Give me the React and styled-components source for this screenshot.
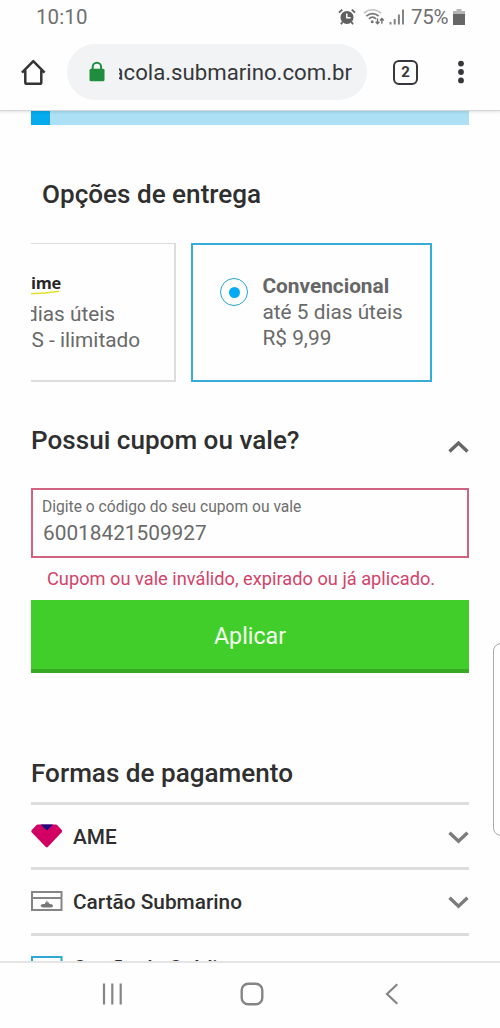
import React from "react";
import styled, { createGlobalStyle } from "styled-components";

const GlobalStyle = createGlobalStyle`
  * {
    box-sizing: border-box;
  }
  body {
    margin: 0;
    background-color: #FEFEFE;
    font-family: Roboto, "Noto Sans", sans-serif;
    color: #2F2F2F;
  }
  svg {
    display: block;
    flex-shrink: 0;
  }
`;

const Screen = styled.div`
  position: relative;
  display: flex;
  flex-direction: column;
  width: 500px;
  height: 1028px;
  overflow: hidden;
  background-color: #FEFEFE;
`;

const StatusBar = styled.div`
  display: flex;
  align-items: center;
  justify-content: space-between;
  height: 34px;
  padding: 0 35px 0 36px;
  background-color: #FEFEFE;
  color: #707070;
  font-size: 20.5px;
  line-height: 34px;
  z-index: 2;
`;

const Clock = styled.span`
  letter-spacing: 0.1px;
`;

const StatusIcons = styled.div`
  display: flex;
  align-items: center;
`;

const Wifi = styled.span`
  margin: 0 4px 0 7px;
`;

const Battery = styled.span`
  width: 40px;
  margin: 0 2px 0 6px;
  letter-spacing: -0.3px;
`;

const Toolbar = styled.header`
  display: flex;
  align-items: center;
  flex-shrink: 0;
  height: 77px;
  padding: 0 32px 0 20px;
  background-color: #FEFEFE;
  border-bottom: 1px solid #D6D6D6;
  box-shadow: 0 1px 3px rgba(0, 0, 0, 0.12);
  z-index: 1;
`;

const AddressBar = styled.div`
  display: flex;
  align-items: center;
  width: 300px;
  height: 56px;
  margin: 0 26px 0 20px;
  padding: 0 0 0 21px;
  border-radius: 28px;
  background-color: #F1F3F4;
`;

const Url = styled.div`
  display: flex;
  justify-content: flex-end;
  width: 233px;
  margin-left: 13px;
  overflow: hidden;
  font-size: 22.2px;
  line-height: 30px;
  white-space: nowrap;
  color: #36383B;
`;

const TabCount = styled.div`
  display: flex;
  align-items: center;
  justify-content: center;
  width: 25px;
  height: 25px;
  margin-right: 39px;
  border: 2.5px solid #35373A;
  border-radius: 6px;
  font-size: 15px;
  font-weight: 700;
  color: #35373A;
`;

const Page = styled.main`
  display: flex;
  flex-direction: column;
  flex-shrink: 0;
  height: 850px;
  padding: 0 31px;
  overflow: hidden;
`;

const Progress = styled.div`
  flex-shrink: 0;
  height: 14px;
  background-color: #ABE0F5;
`;

const ProgressValue = styled.div`
  width: 19px;
  height: 14px;
  background-color: #05ABEC;
`;

const Title = styled.h2`
  margin: ${({ $margin }) => $margin || "0"};
  font-size: 26.1px;
  font-weight: 500;
  line-height: 34px;
`;

const Options = styled.section`
  display: flex;
  flex-shrink: 0;
  gap: 15px;
  height: 139px;
  margin-top: 32px;
`;

const Option = styled.div`
  display: flex;
  width: ${({ $selected }) => ($selected ? "241px" : "145px")};
  padding: ${({ $selected }) => ($selected ? "28px 0 0 27px" : "29px 0 0")};
  border: 2px solid ${({ $selected }) => ($selected ? "#35ADD6" : "#DDD")};
  border-width: ${({ $selected }) => ($selected ? "2px" : "1px 2px 2px 0")};
  overflow: hidden;
`;

const Radio = styled.span`
  display: flex;
  align-items: center;
  justify-content: center;
  flex-shrink: 0;
  width: 28px;
  height: 28px;
  margin: 5px 14.5px 0 0;
  border: 1.5px solid #29A5CE;
  border-radius: 50%;
  &::after {
    content: "";
    width: 11px;
    height: 11px;
    border-radius: 50%;
    background-color: #05ABF2;
  }
`;

const OptionText = styled.div`
  font-size: 20.8px;
  line-height: 26px;
  white-space: nowrap;
  color: #6A6A6A;
  strong {
    font-weight: 700;
    color: #666;
  }
`;

const PrimeLogo = styled.div`
  height: 28px;
  font-family: "Open Sans", sans-serif;
  font-size: 16.4px;
  font-weight: 700;
  letter-spacing: -0.3px;
  line-height: 20px;
  color: #262626;
  svg {
    margin-top: -3px;
  }
`;

const ClippedLine = styled.div`
  margin-left: ${({ $offset }) => $offset};
`;

const CouponHeader = styled.div`
  display: flex;
  justify-content: space-between;
  height: 34px;
  flex-shrink: 0;
  margin-top: 41px;
  svg {
    margin-top: 17px;
  }
`;

const Field = styled.label`
  display: flex;
  flex-direction: column;
  flex-shrink: 0;
  height: 70px;
  margin-top: 31px;
  padding: 8px 10px 0 9px;
  border: 2px solid #D0637F;
  font-size: 15.6px;
  line-height: 18px;
  color: #6E6E6E;
`;

const Input = styled.input`
  height: 28px;
  margin: 3px 0 0 1px;
  padding: 0;
  border: none;
  outline: none;
  background: none;
  font-family: inherit;
  font-size: 20.8px;
  color: #6A6A6A;
`;

const ErrorMessage = styled.p`
  flex-shrink: 0;
  height: 42px;
  margin: 0;
  padding-left: 16px;
  font-size: 18.24px;
  line-height: 41px;
  white-space: nowrap;
  color: #D3436A;
`;

const ApplyButton = styled.button`
  flex-shrink: 0;
  height: 73px;
  padding: 3px 0 0;
  border: none;
  border-bottom: 4px solid #35AA22;
  background-color: #41CE2A;
  font-family: inherit;
  font-size: 23.2px;
  color: #F4FFF0;
`;

const PaymentList = styled.ul`
  flex-shrink: 0;
  margin: 12px 0 0;
  padding: 0;
  list-style: none;
`;

const PaymentItem = styled.li`
  display: flex;
  align-items: center;
  height: 65.3px;
  border-top: 3px solid #DCDCDC;
  font-size: 20.8px;
  font-weight: 500;
  span {
    flex: 1;
    margin: 2px 0 0 10px;
  }
  svg:last-child {
    margin-top: 2px;
  }
  &:last-child span {
    margin-top: 3px;
  }
`;

const NavBar = styled.nav`
  display: flex;
  align-items: center;
  flex-shrink: 0;
  height: 67px;
  padding: 0 101px 4px;
  border-top: 2px solid #E5E5E5;
`;

const NavButton = styled.div`
  margin-right: ${({ $gap }) => $gap};
`;

// edge panel handle, floats over the page
const EdgeHandle = styled.div`
  position: absolute;
  top: 643px;
  right: -12px;
  width: 19px;
  height: 193px;
  border: 1px solid #AAA;
  border-radius: 8px;
  background-color: #FEFEFE;
  z-index: 2;
`;

const AlarmIcon = () => (
  <svg width="18" height="18" viewBox="0 0 18 18" fill="none">
    <circle cx="9" cy="9.4" r="6.5" fill="#606060" />
    <path d="M1 4.6 4.2 1.6M17 4.6l-3.2-3M4.6 14 3 16.3M13.4 14l1.6 2.3" stroke="#606060" strokeWidth="1.8" />
    <path d="M8.8 5.4v4.3h3.8" stroke="#FEFEFE" strokeWidth="1.5" />
  </svg>
);

const WifiIcon = () => (
  <svg width="22" height="18" viewBox="0 0 22 18" fill="none" strokeWidth="1.7">
    <path d="M1 5.2c5-4.6 12-4.6 17 0" stroke="#C4C4C4" />
    <path d="M3.4 8.1c3.6-3.4 8.6-3.4 12.2 0" stroke="#777" />
    <path d="M5.9 10.9c2.2-2.2 5-2.2 7.2 0" stroke="#777" />
    <circle cx="9.2" cy="13.8" r="1.5" fill="#777" />
    <path d="M14.5 10.5v5M12.6 13.8l1.9 2 1.9-2M18.9 15.8v-5M17 12.6l1.9-2 1.9 2" stroke="#707070" strokeWidth="1.4" />
  </svg>
);

const SignalIcon = () => (
  <svg width="16" height="18" viewBox="0 0 16 18" fill="#858585">
    <path d="M.5 14h2v2.5h-2zM4.7 11h2v5.5h-2zM8.9 6.5h2v10h-2zM13 1.5h2v15h-2z" />
  </svg>
);

const BatteryIcon = () => (
  <svg width="12" height="18" viewBox="0 0 12 18">
    <path d="M3.5 1h5v2H12v4H0V3h3.5z" fill="#B5B5B5" />
    <path d="M0 6h12v10.5q0 .5-.5.5H.5q-.5 0-.5-.5z" fill="#666" />
  </svg>
);

const HomeIcon = () => (
  <svg width="27" height="27" viewBox="0 0 27 27" fill="none" stroke="#333" strokeWidth="2.5">
    <path d="M2 13.6 13.3 2.2l11.3 11.4M5.3 11.2v12q0 1.6 1.6 1.6h12.8q1.6 0 1.6-1.6v-12" strokeLinejoin="round" />
  </svg>
);

const LockIcon = () => (
  <svg width="18" height="22" viewBox="0 0 18 22">
    <path d="M4.7 9V5.9a4.2 4.2 0 0 1 8.4 0V9" fill="none" stroke="#1E8E3E" strokeWidth="2" />
    <rect x="1.5" y="7.7" width="15" height="12.6" rx="1.5" fill="#1E8E3E" />
  </svg>
);

const MenuIcon = () => (
  <svg width="8" height="24" viewBox="0 0 8 24" fill="#35373A">
    <circle cx="4" cy="3.6" r="2.9" />
    <circle cx="4" cy="12" r="2.9" />
    <circle cx="4" cy="20.4" r="2.9" />
  </svg>
);

const Chevron = ({ up }) => (
  <svg width="21" height="13" viewBox="0 0 21 13" fill="none" stroke={up ? "#666" : "#7C7C7C"} strokeWidth="3.4">
    <path d={up ? "M1.5 11.5 10.5 3l9 8.5" : "M1.5 1.7 10.5 10.2l9-8.5"} />
  </svg>
);

const AmeIcon = () => (
  <svg width="32" height="24" viewBox="0 0 32 24">
    <path d="M6.8.6h18q1 0 1.8.8L30.7 6q.9 1.2-.2 2.4L17 22.8q-1.2 1.2-2.4 0L.9 8.4Q-.2 7.2.8 6L5 1.4Q5.8.6 6.8.6Z" fill="#D30063" />
    <path d="M9.7.6h12.4l-6.2 5.8z" fill="#1B0A82" />
  </svg>
);

const SubmarinoCardIcon = () => (
  <svg width="32" height="20" viewBox="0 0 32 20">
    <path d="M1 1h29.5v18H1zM1 7h29.5" fill="none" stroke="#858585" strokeWidth="2" />
    <path d="M9.5 14.5q.8-1.4 3.5-1.4h1v-1.7h1.4V9.8h1v1.6h1.8v1.7q3.2 0 3.8 1.4.3 1.8-2.4 1.9h-7.6q-2.3-.1-2.5-1.9z" fill="#777" />
  </svg>
);

const CreditCardIcon = () => (
  <svg width="32" height="22" viewBox="0 0 32 22">
    <path d="M1 1h29.5v20H1zM1 8h29.5" fill="none" stroke="#2FA8D2" strokeWidth="2" />
  </svg>
);

const payments = [
  { name: "AME", Icon: AmeIcon },
  { name: "Cartão Submarino", Icon: SubmarinoCardIcon },
  { name: "Cartão de Crédito", Icon: CreditCardIcon },
];

const App = () => (
  <>
    <GlobalStyle />
    <Screen>
      <StatusBar>
        <Clock>10:10</Clock>
        <StatusIcons>
          <AlarmIcon />
          <Wifi>
            <WifiIcon />
          </Wifi>
          <SignalIcon />
          <Battery>75%</Battery>
          <BatteryIcon />
        </StatusIcons>
      </StatusBar>
      <Toolbar>
        <HomeIcon />
        <AddressBar>
          <LockIcon />
          <Url>acola.submarino.com.br</Url>
        </AddressBar>
        <TabCount>2</TabCount>
        <MenuIcon />
      </Toolbar>
      <Page>
        <Progress>
          <ProgressValue />
        </Progress>
        <Title $margin="52px 0 0 11px">Opções de entrega</Title>
        <Options>
          <Option>
            <OptionText>
              <PrimeLogo>
                ime
                <svg width="30" height="5" viewBox="0 0 30 5">
                  <path d="M0 3.8Q14 3.6 28 1.2" fill="none" stroke="#E3E02C" strokeWidth="1.6" />
                </svg>
              </PrimeLogo>
              <ClippedLine $offset="-5px">dias úteis</ClippedLine>
              <ClippedLine $offset="0.5px">S - ilimitado</ClippedLine>
            </OptionText>
          </Option>
          <Option $selected>
            <Radio />
            <OptionText>
              <strong>Convencional</strong>
              <div>até 5 dias úteis</div>
              <div>R$ 9,99</div>
            </OptionText>
          </Option>
        </Options>
        <CouponHeader>
          <Title>Possui cupom ou vale?</Title>
          <Chevron up />
        </CouponHeader>
        <Field>
          Digite o código do seu cupom ou vale
          <Input type="text" defaultValue="60018421509927" />
        </Field>
        <ErrorMessage>Cupom ou vale inválido, expirado ou já aplicado.</ErrorMessage>
        <ApplyButton type="button">Aplicar</ApplyButton>
        <Title $margin="83px 0 0">Formas de pagamento</Title>
        <PaymentList>
          {payments.map(({ name, Icon }) => (
            <PaymentItem key={name}>
              <Icon />
              <span>{name}</span>
              <Chevron />
            </PaymentItem>
          ))}
        </PaymentList>
      </Page>
      <NavBar>
        <NavButton $gap="117px">
          <svg width="22" height="22" viewBox="0 0 22 22" stroke="#858585" strokeWidth="2.2">
            <path d="M3 .5v21M11.3 .5v21M19.7 .5v21" />
          </svg>
        </NavButton>
        <NavButton $gap="121px">
          <svg width="24" height="24" viewBox="0 0 24 24" fill="none" stroke="#858585" strokeWidth="2.4">
            <rect x="1.7" y="1.7" width="20.6" height="20.6" rx="6.5" />
          </svg>
        </NavButton>
        <NavButton>
          <svg width="14" height="22" viewBox="0 0 14 22" fill="none" stroke="#858585" strokeWidth="2.2">
            <path d="M12.3 1.2 2 11l10.3 9.8" />
          </svg>
        </NavButton>
      </NavBar>
      <EdgeHandle />
    </Screen>
  </>
);

export default App;
